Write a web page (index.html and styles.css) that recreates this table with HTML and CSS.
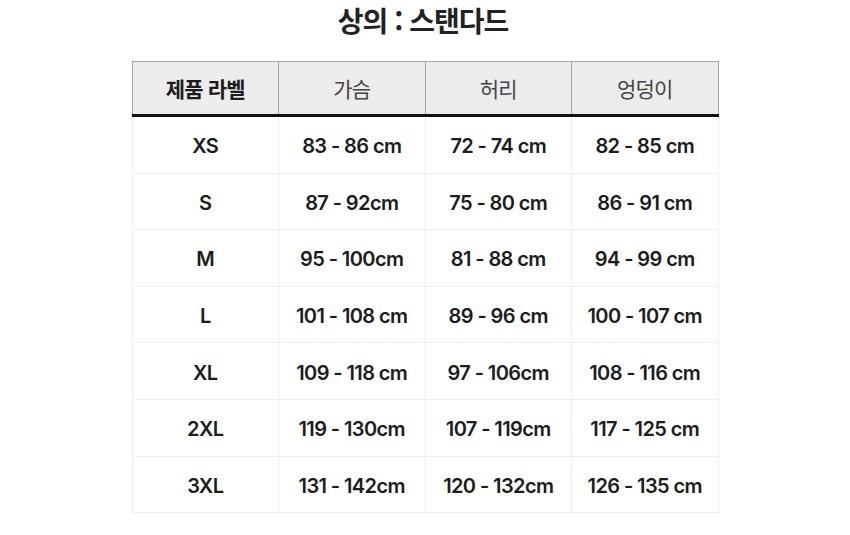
FILE: index.html
```html
<!DOCTYPE html>
<html lang="ko">
<head>
<meta charset="utf-8">
<link rel="stylesheet" href="styles.css">
</head>
<body>
<div class="page">
  <h1 class="title">상의 : 스탠다드</h1>
  <table class="size-table">
    <thead>
      <tr>
        <th class="label-head">제품 라벨</th>
        <th>가슴</th>
        <th>허리</th>
        <th>엉덩이</th>
      </tr>
    </thead>
    <tbody>
      <tr><td>XS</td><td>83 - 86 cm</td><td>72 - 74 cm</td><td>82 - 85 cm</td></tr>
      <tr><td>S</td><td>87 - 92cm</td><td>75 - 80 cm</td><td>86 - 91 cm</td></tr>
      <tr><td>M</td><td>95 - 100cm</td><td>81 - 88 cm</td><td>94 - 99 cm</td></tr>
      <tr><td>L</td><td>101 - 108 cm</td><td>89 - 96 cm</td><td>100 - 107 cm</td></tr>
      <tr><td>XL</td><td>109 - 118 cm</td><td>97 - 106cm</td><td>108 - 116 cm</td></tr>
      <tr><td>2XL</td><td>119 - 130cm</td><td>107 - 119cm</td><td>117 - 125 cm</td></tr>
      <tr><td>3XL</td><td>131 - 142cm</td><td>120 - 132cm</td><td>126 - 135 cm</td></tr>
    </tbody>
  </table>
</div>
</body>
</html>
```
FILE: styles.css
```css
html, body {
  margin: 0;
  padding: 0;
  background: #ffffff;
}
body {
  font-family: Inter, "Noto Sans CJK KR", sans-serif;
  color: #1c1c1c;
}
.page {
  width: 850px;
  height: 535px;
  display: flex;
  flex-direction: column;
  align-items: center;
}
.title {
  margin: 0;
  height: 61px;
  font-family: "Noto Sans CJK KR", sans-serif;
  font-size: 28px;
  font-weight: 700;
  letter-spacing: -1px;
  color: #222;
  line-height: 40px;
  padding-right: 4px;
}
.size-table {
  border-collapse: collapse;
  width: 587px;
  table-layout: fixed;
}
.size-table th {
  height: 52px;
  padding: 0;
  background: #ececec;
  border: 1px solid #a6a6a6;
  border-bottom: 3px solid #111;
  font-family: "Noto Sans CJK KR", sans-serif;
  font-size: 21px;
  font-weight: 400;
  color: #444;
  letter-spacing: -0.8px;
}
.size-table th.label-head {
  font-weight: 700;
  color: #1c1c1c;
}
.size-table td {
  height: 52.6px;
  padding: 3px 0 0 0;
  text-align: center;
  border: 1px solid #efefef;
  font-size: 20px;
  font-weight: 600;
  letter-spacing: -0.6px;
  color: #1c1c1c;
}
```
